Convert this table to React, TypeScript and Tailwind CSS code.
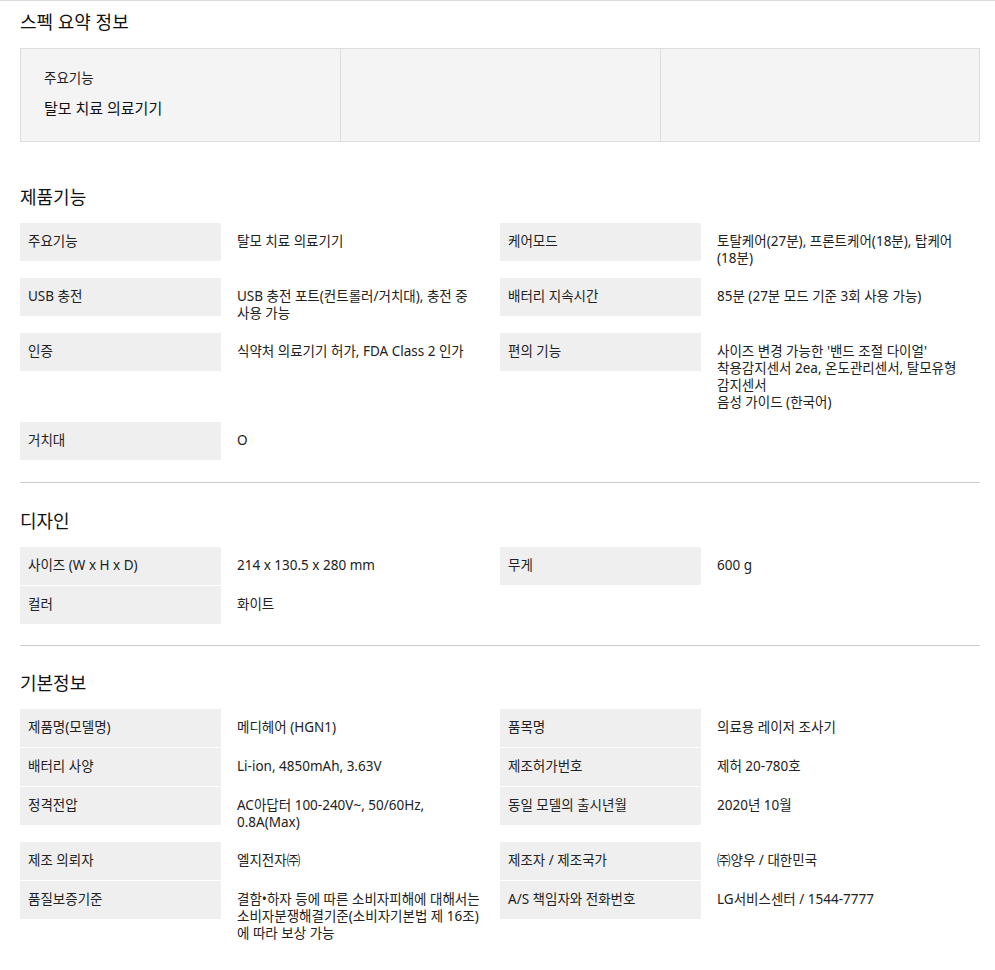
import React from "react";

type Cell = string | string[];
type Row = [string, Cell, string?, Cell?];

const Lines = ({ v }: { v: Cell }) => {
  const arr = Array.isArray(v) ? v : [v];
  return (
    <>
      {arr.map((l, i) => (
        <div key={i} className="whitespace-nowrap">
          {l}
        </div>
      ))}
    </>
  );
};

const labelCls = "h-[38px] bg-[#efefef] pl-[8px] pt-[10px] leading-[17px] text-[13.5px] text-[#222]";
const valueCls = "pl-[16px] py-[10px] leading-[17px] text-[13.5px] text-[#222]";

const SpecRows = ({ rows }: { rows: Row[] }) => (
  <div className="flex flex-col gap-[1px]">
    {rows.map((r, i) => (
      <div key={i} className="grid grid-cols-[201px_279px_201px_279px] items-start">
        <div className={labelCls}>{r[0]}</div>
        <div className={valueCls}>
          <Lines v={r[1]} />
        </div>
        {r[2] ? <div className={labelCls}>{r[2]}</div> : <div />}
        {r[3] ? (
          <div className={valueCls}>
            <Lines v={r[3]} />
          </div>
        ) : (
          <div />
        )}
      </div>
    ))}
  </div>
);

const Heading = ({ children }: { children: React.ReactNode }) => (
  <h3 className="text-[18px] leading-[26px] text-[#111] font-normal">{children}</h3>
);

const feature: Row[] = [
  ["주요기능", "탈모 치료 의료기기", "케어모드", ["토탈케어(27분), 프론트케어(18분), 탑케어", "(18분)"]],
  ["USB 충전", ["USB 충전 포트(컨트롤러/거치대), 충전 중", "사용 가능"], "배터리 지속시간", "85분 (27분 모드 기준 3회 사용 가능)"],
  [
    "인증",
    "식약처 의료기기 허가, FDA Class 2 인가",
    "편의 기능",
    ["사이즈 변경 가능한 '밴드 조절 다이얼'", "착용감지센서 2ea, 온도관리센서, 탈모유형", "감지센서", "음성 가이드 (한국어)"],
  ],
  ["거치대", "O"],
];

const design: Row[] = [
  ["사이즈 (W x H x D)", "214 x 130.5 x 280 mm", "무게", "600 g"],
  ["컬러", "화이트"],
];

const basic: Row[] = [
  ["제품명(모델명)", "메디헤어 (HGN1)", "품목명", "의료용 레이저 조사기"],
  ["배터리 사양", "Li-ion, 4850mAh, 3.63V", "제조허가번호", "제허 20-780호"],
  ["정격전압", ["AC아답터 100-240V~, 50/60Hz,", "0.8A(Max)"], "동일 모델의 출시년월", "2020년 10월"],
  ["제조 의뢰자", "엘지전자㈜", "제조자 / 제조국가", "㈜양우 / 대한민국"],
  [
    "품질보증기준",
    ["결함•하자 등에 따른 소비자피해에 대해서는", "소비자분쟁해결기준(소비자기본법 제 16조)", "에 따라 보상 가능"],
    "A/S 책임자와 전화번호",
    "LG서비스센터 / 1544-7777",
  ],
];

export default function App() {
  return (
    <div className="min-h-[970px] w-full bg-white border-t border-[#dddddd] font-['Noto_Sans','Noto_Sans_CJK_KR',sans-serif]">
      <div className="ml-[20px] w-[960px]">
        <div className="pt-[8px]">
          <Heading>스펙 요약 정보</Heading>
          <div className="mt-[13px] h-[94px] border border-[#dddddd] bg-[#f4f4f4] grid grid-cols-[319px_320px_1fr]">
            <div className="pl-[23px] pt-[20px]">
              <div className="text-[13.5px] leading-[18px] text-[#222]">주요기능</div>
              <div className="mt-[10px] text-[15px] leading-[22px] text-[#111]">탈모 치료 의료기기</div>
            </div>
            <div className="border-l border-[#dddddd]" />
            <div className="border-l border-[#dddddd]" />
          </div>
        </div>

        <div className="pt-[42px] pb-[22px]">
          <Heading>제품기능</Heading>
          <div className="mt-[13px]">
            <SpecRows rows={feature} />
          </div>
        </div>

        <div className="border-t border-[#cccccc] pt-[25px] pb-[21px]">
          <Heading>디자인</Heading>
          <div className="mt-[13px]">
            <SpecRows rows={design} />
          </div>
        </div>

        <div className="border-t border-[#cccccc] pt-[24px] pb-[23px]">
          <Heading>기본정보</Heading>
          <div className="mt-[13px]">
            <SpecRows rows={basic} />
          </div>
        </div>
      </div>
    </div>
  );
}
